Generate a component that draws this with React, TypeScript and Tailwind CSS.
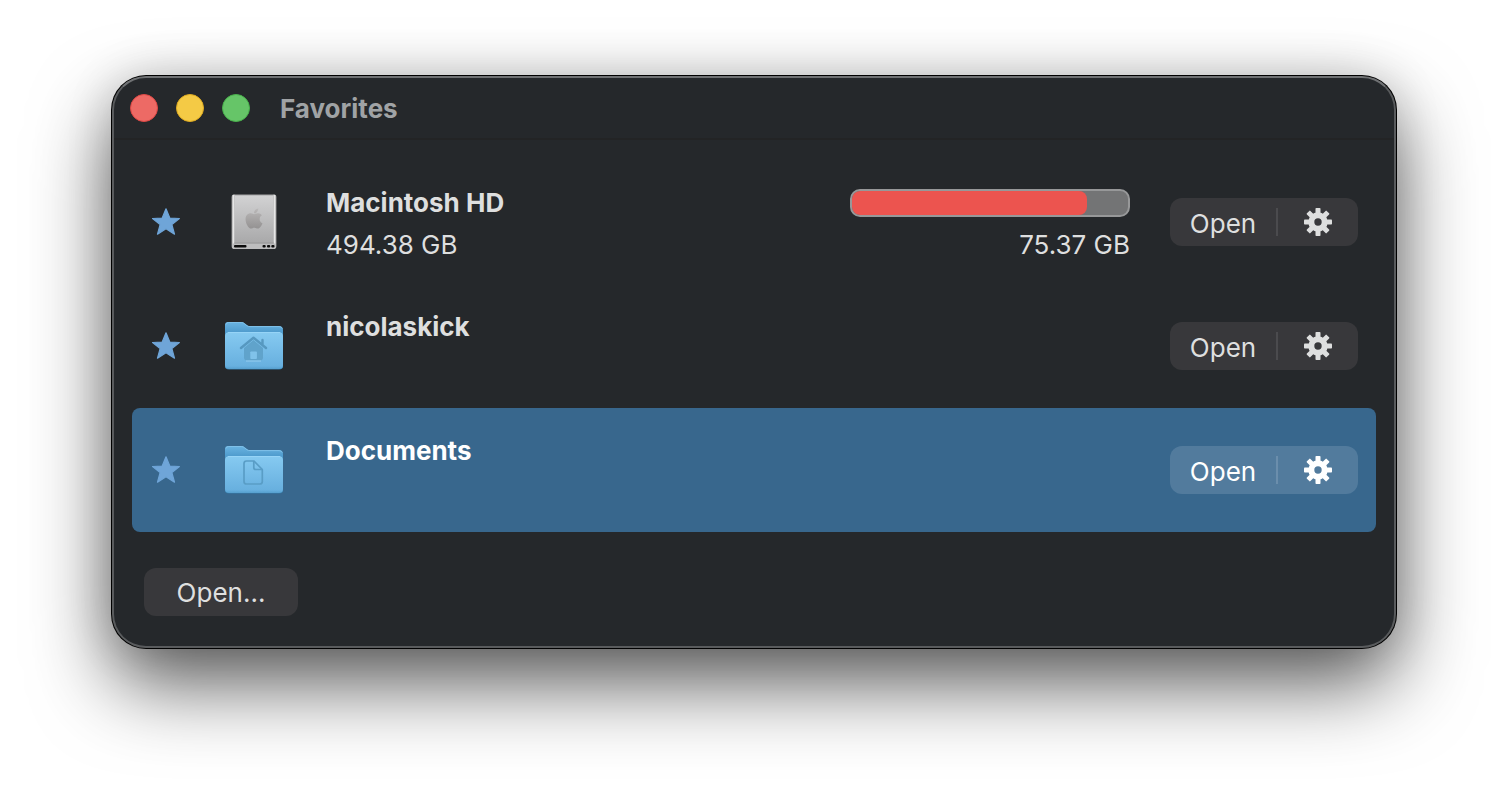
import React, { useState } from "react";
import { FaApple } from "react-icons/fa";

interface Favorite {
  id: string;
  name: string;
  icon: React.ReactNode;
  capacity?: string;
  free?: string;
  usedPercent?: number;
}

const StarIcon = () => (
  <svg viewBox="0 0 28 28" className="size-7" fill="currentColor" aria-hidden="true">
    <path
      d="M14 .8 17.800 10 27.400 10.500 19.900 16.600 22.500 26.200 14 20.800 5.500 26.200 8.100 16.600.600 10.500 10.200 10Z"
      stroke="currentColor"
      strokeWidth="1.2"
      strokeLinejoin="round"
    />
  </svg>
);

const teeth = [0, 45, 90, 135, 180, 225, 270, 315];

const GearIcon = () => (
  <svg viewBox="0 0 28 28" className="size-7" aria-hidden="true">
    <circle cx="14" cy="14" r="6.7" fill="none" stroke="currentColor" strokeWidth="6" />
    {teeth.map((angle) => (
      <rect
        key={angle}
        x="11.5"
        y="0"
        width="5"
        height="7"
        rx="0.8"
        fill="currentColor"
        transform={`rotate(${angle} 14 14)`}
      />
    ))}
  </svg>
);

const DriveIcon = () => (
  <svg viewBox="0 0 60 64" className="h-16 w-15" aria-hidden="true">
    <defs>
      <linearGradient id="drive-body" x1="0" y1="0" x2="0" y2="1">
        <stop offset="0" stopColor="#d2d2d3" />
        <stop offset="1" stopColor="#a9a9aa" />
      </linearGradient>
      <linearGradient id="drive-edge" x1="0" y1="0" x2="1" y2="0">
        <stop offset="0" stopColor="#8e8e8e" />
        <stop offset="0.04" stopColor="#ededed" />
        <stop offset="0.09" stopColor="#a4a4a4" />
        <stop offset="0.91" stopColor="#a4a4a4" />
        <stop offset="0.96" stopColor="#ededed" />
        <stop offset="1" stopColor="#8e8e8e" />
      </linearGradient>
      <linearGradient id="drive-apple" x1="0" y1="0" x2="0" y2="1">
        <stop offset="0" stopColor="#bab8b8" />
        <stop offset="1" stopColor="#949292" />
      </linearGradient>
    </defs>
    <path d="M10 4.5h40q2.5 0 2.5 3V56q0 3-3 3h-39q-3 0-3-3V7.500q0-3 2.500-3Z" fill="url(#drive-edge)" />
    <path d="M11 5.500h38l.5 47h-39Z" fill="url(#drive-body)" />
    <path d="M8 53.500h44V56q0 3-3 3H11q-3 0-3-3Z" fill="#bdbdbe" />
    <path d="M10 53h40" stroke="#9a9a9b" strokeWidth="1" />
    <rect x="10" y="55" width="12.500" height="2.400" rx="1" fill="#0c0c0c" />
    <rect x="38.500" y="55" width="3.200" height="2.400" rx="1" fill="#0c0c0c" />
    <rect x="43" y="55" width="3.200" height="2.400" rx="1" fill="#0c0c0c" />
    <rect x="47.300" y="55" width="3.200" height="2.400" rx="1" fill="#0c0c0c" />
    <FaApple x="18.500" y="17" size={23} fill="url(#drive-apple)" />
  </svg>
);

const FolderIcon = ({ id, children }: { id: string; children: React.ReactNode }) => (
  <svg viewBox="0 -1 60 64" className="h-16 w-15" aria-hidden="true">
    <defs>
      <linearGradient id={`${id}-front`} x1="0" y1="0" x2="0" y2="1">
        <stop offset="0" stopColor="#86caf1" />
        <stop offset="0.92" stopColor="#68b0df" />
        <stop offset="1" stopColor="#559fce" />
      </linearGradient>
      <linearGradient id={`${id}-back`} x1="0" y1="0" x2="0" y2="1">
        <stop offset="0" stopColor="#6ab4e2" />
        <stop offset="0.22" stopColor="#4f9bcd" />
        <stop offset="1" stopColor="#4a90bf" />
      </linearGradient>
    </defs>
    <path
      d="M1 51V10q0-3 3-3h13.500q2 0 3.500 1.500l2.500 2Q24.500 11 26.500 11H55q4 0 4 4v36q0 3-3 3H4q-3 0-3-3Z"
      fill={`url(#${id}-back)`}
    />
    <path
      d="M2 9.500q.5-2 2.500-2h13q1.700 0 3 1.300l2.500 2q1.200.8 3 .8H55q2.500 0 3.300 2"
      fill="none"
      stroke="#7fc0e8"
      strokeWidth="1"
    />
    <rect x="1" y="17" width="58" height="37.500" rx="4" fill="#347ba9" />
    <rect x="1" y="17" width="58" height="37" rx="4" fill={`url(#${id}-front)`} />
    <path d="M4 17.500h52" stroke="#96d4f7" strokeWidth="1" />
    {children}
  </svg>
);

const HomeGlyph = () => (
  <g>
    <path d="M20 33 29.500 25 39 33V42.500q0 3-3 3H23q-3 0-3-3Z" fill="#60a3cb" />
    <path
      d="M17 33 29.500 22.700 42 33M38.500 29.500V25"
      fill="none"
      stroke="#5698c0"
      strokeWidth="2.400"
      strokeLinecap="round"
      strokeLinejoin="round"
    />
    <path d="M22 46h15" stroke="#95cdef" strokeWidth="1" />
    <rect x="26.300" y="36.500" width="6.600" height="7.500" rx="0.800" fill="#80c2ea" />
  </g>
);

const DocumentGlyph = () => (
  <g fill="none" stroke="#599dc6" strokeWidth="1.700" strokeLinejoin="round">
    <path d="M22.500 22H30l8.300 8.500v12q0 2.500-2.500 2.500H22.500q-2.500 0-2.500-2.500v-18q0-2.500 2.500-2.500Z" />
    <path d="M29.800 22v6.500q0 2 2 2h6.500" />
  </g>
);

const favorites: Favorite[] = [
  {
    id: "macintosh-hd",
    name: "Macintosh HD",
    icon: <DriveIcon />,
    capacity: "494.38 GB",
    free: "75.37 GB",
    usedPercent: 85,
  },
  {
    id: "home",
    name: "nicolaskick",
    icon: (
      <FolderIcon id="home-folder">
        <HomeGlyph />
      </FolderIcon>
    ),
  },
  {
    id: "documents",
    name: "Documents",
    icon: (
      <FolderIcon id="documents-folder">
        <DocumentGlyph />
      </FolderIcon>
    ),
  },
];

const TitleBar = () => (
  <header className="flex h-[62px] items-center border-b-2 border-[#232425] px-4">
    <div className="flex gap-[18px]">
      <button className="size-7 rounded-full border border-[#df4744] bg-[#ed6a65]" aria-label="Close" />
      <button className="size-7 rounded-full border border-[#e0ac20] bg-[#f4ca45]" aria-label="Minimize" />
      <button className="size-7 rounded-full border border-[#48b14b] bg-[#66c568]" aria-label="Zoom" />
    </div>
    <h1 className="ml-[30px] pt-0.5 text-[26px] leading-8 font-bold text-[#a0a3a5]">Favorites</h1>
  </header>
);

interface RowProps {
  item: Favorite;
  selected: boolean;
  onSelect: () => void;
}

const FavoriteRow: React.FC<RowProps> = ({ item, selected, onSelect }) => (
  <li
    onClick={onSelect}
    className={`flex h-31 items-center rounded-lg pr-[18px] pl-5 ${
      selected ? "bg-[#38678d] text-white" : "text-[#dedfdf]"
    }`}
  >
    <button className="shrink-0 text-[#6fa5d8]" aria-label={`Remove ${item.name} from favorites`}>
      <StarIcon />
    </button>
    <div className="ml-11 shrink-0">{item.icon}</div>

    <div className="ml-[42px] flex flex-1 flex-col gap-3.5 self-start pt-[29px]">
      <h2 className="text-[26px] leading-7 font-bold">{item.name}</h2>
      {item.capacity && <p className="text-[26px] leading-7">{item.capacity}</p>}
    </div>

    {item.usedPercent !== undefined && (
      <div className="mr-10 flex w-70 flex-col gap-3.5 self-start pt-[29px]">
        <div
          role="progressbar"
          aria-label="Used space"
          aria-valuenow={item.usedPercent}
          className="h-7 overflow-hidden rounded-[10px] border-2 border-[#979899] bg-[#737475]"
        >
          <div className="h-full rounded-lg bg-[#ec544f]" style={{ width: `${item.usedPercent}%` }} />
        </div>
        <p className="text-right text-[26px] leading-7">{item.free}</p>
      </div>
    )}

    <div
      className={`flex h-12 shrink-0 items-center rounded-xl ${selected ? "bg-[#527b9d]" : "bg-[#38383b]"}`}
    >
      <button className="h-full w-[106px] pt-0.5 text-[26px]">Open</button>
      <div className={`h-7 w-0.5 ${selected ? "bg-[#6b8eac]" : "bg-[#4b4b4e]"}`} />
      <button className="flex h-full w-20 items-center justify-center" aria-label={`${item.name} options`}>
        <GearIcon />
      </button>
    </div>
  </li>
);

export default function App() {
  const [selectedId, setSelectedId] = useState("documents");

  return (
    <div className="min-h-screen overflow-hidden bg-white px-28 pt-19 pb-37 font-['Inter','Liberation_Sans',sans-serif]">
      <main className="rounded-[34px] border-2 border-[#595b5d] border-t-[#6f7173] bg-[#25282b] shadow-[0_0_0_1px_#000,0_36px_80px_rgba(0,0,0,0.64),0_0_48px_rgba(0,0,0,0.14)]">
        <TitleBar />
        <ul className="px-[18px] pt-5">
          {favorites.map((item) => (
            <FavoriteRow
              key={item.id}
              item={item}
              selected={item.id === selectedId}
              onSelect={() => setSelectedId(item.id)}
            />
          ))}
        </ul>
        <footer className="px-[30px] pt-9 pb-[30px]">
          <button className="h-12 w-[154px] rounded-xl bg-[#38383b] text-[26px] text-[#dedfdf]">Open...</button>
        </footer>
      </main>
    </div>
  );
}
